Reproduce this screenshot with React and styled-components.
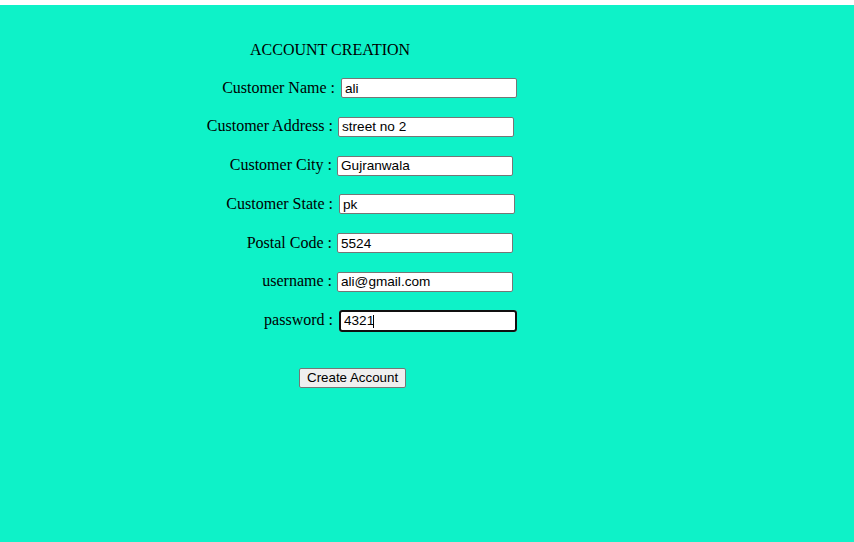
import React from 'react';
import styled, { createGlobalStyle } from 'styled-components';

const GlobalStyle = createGlobalStyle`
  html, body {
    margin: 0;
    padding: 0;
    background: #ffffff;
  }
`;

const Page = styled.div`
  margin-top: 5px;
  height: 537px;
  background: #0ef2c8;
  padding: 36px 0 0 180px;
  box-sizing: border-box;
  font-family: "Liberation Serif", "Times New Roman", serif;
  font-size: 16px;
  color: #000;
`;

const Title = styled.div`
  padding-left: 70px;
  line-height: 18px;
  margin-bottom: 19px;
`;

const Fields = styled.div`
  display: flex;
  flex-direction: column;
  gap: 18.8px;
`;

const Row = styled.div`
  display: flex;
  align-items: center;
  height: 20px;
`;

const Label = styled.label`
  box-sizing: border-box;
  width: 155px;
  text-align: right;
  white-space: nowrap;
  padding-right: ${p => p.pad}px;
  padding-bottom: 1px;
`;

const InputWrap = styled.div`
  position: relative;
  margin-left: ${p => p.gap}px;
`;

const TextInput = styled.input`
  box-sizing: border-box;
  width: 176px;
  height: 20px;
  margin: 0;
  padding: 1px 3px;
  border: 1px solid #767676;
  border-radius: 2px;
  background: #fff;
  font-family: "Liberation Sans", Arial, sans-serif;
  font-size: 13.6px;
  color: #000;
  outline: ${p => (p.focused ? '2px solid #101010' : 'none')};
  outline-offset: -1px;
  box-shadow: ${p => (p.focused ? '0 0 0 1px #ffffff' : 'none')};
`;

const Caret = styled.span`
  position: absolute;
  left: 33px;
  top: 4px;
  width: 1px;
  height: 13px;
  background: #000;
`;

const SubmitButton = styled.button`
  margin: 37px 0 0 119px;
  box-sizing: border-box;
  height: 20px;
  padding: 1px 7px;
  border: 1px solid #767676;
  border-radius: 2px;
  background: #efefef;
  font-family: "Liberation Sans", Arial, sans-serif;
  font-size: 13.33px;
  color: #000;
`;

const fields = [
  { label: 'Customer Name :', value: 'ali', pad: 0, gap: 6 },
  { label: 'Customer Address :', value: 'street no 2', pad: 2, gap: 3 },
  { label: 'Customer City :', value: 'Gujranwala', pad: 3, gap: 2 },
  { label: 'Customer State :', value: 'pk', pad: 2, gap: 4 },
  { label: 'Postal Code :', value: '5524', pad: 3, gap: 2 },
  { label: 'username :', value: 'ali@gmail.com', pad: 3, gap: 2 },
  { label: 'password :', value: '4321', pad: 2, gap: 5, focused: true },
];

const App = () => (
  <>
    <GlobalStyle />
    <Page>
      <Title>ACCOUNT CREATION</Title>
      <Fields>
        {fields.map(f => (
          <Row key={f.label}>
            <Label pad={f.pad}>{f.label}</Label>
            <InputWrap gap={f.gap}>
              <TextInput type="text" defaultValue={f.value} focused={f.focused} readOnly />
              {f.focused && <Caret />}
            </InputWrap>
          </Row>
        ))}
      </Fields>
      <SubmitButton type="button">Create Account</SubmitButton>
    </Page>
  </>
);

export default App;
